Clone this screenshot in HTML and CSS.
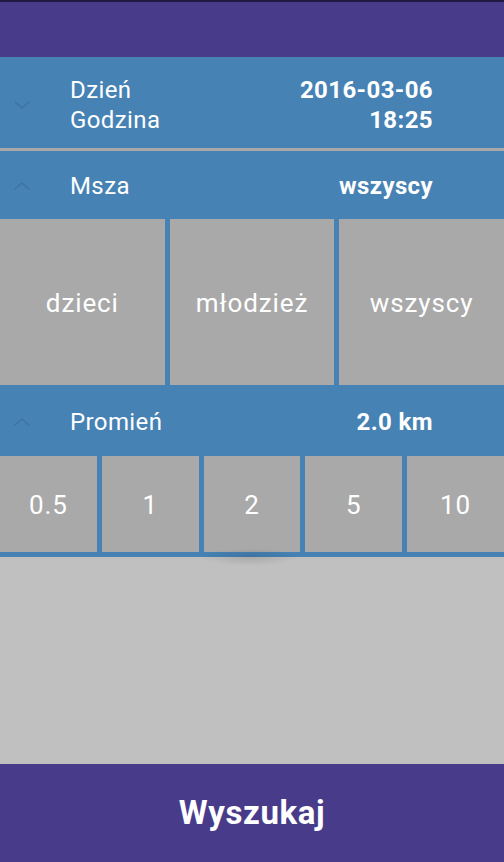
FILE: index.html
```html
<!DOCTYPE html>
<html lang="pl">
<head>
<meta charset="utf-8">
<link rel="stylesheet" href="styles.css">
</head>
<body>
<div class="app">
  <div class="topbar"></div>

  <div class="header header-date">
    <svg class="chev" viewBox="0 0 16 10" width="16" height="10"><path d="M1 2 L8 8 L15 2" /></svg>
    <div class="labels">
      <span>Dzień</span>
      <span>Godzina</span>
    </div>
    <div class="values">
      <span>2016-03-06</span>
      <span>18:25</span>
    </div>
  </div>
  <div class="divider"></div>

  <div class="header">
    <svg class="chev" viewBox="0 0 16 10" width="16" height="10"><path d="M1 8 L8 2 L15 8" /></svg>
    <div class="labels"><span>Msza</span></div>
    <div class="values"><span>wszyscy</span></div>
  </div>
  <div class="grid grid3">
    <div class="cell">dzieci</div>
    <div class="cell">młodzież</div>
    <div class="cell">wszyscy</div>
  </div>

  <div class="header header-radius">
    <svg class="chev" viewBox="0 0 16 10" width="16" height="10"><path d="M1 8 L8 2 L15 8" /></svg>
    <div class="labels"><span>Promień</span></div>
    <div class="values"><span>2.0 km</span></div>
  </div>
  <div class="grid grid5">
    <div class="cell">0.5</div>
    <div class="cell">1</div>
    <div class="cell">2</div>
    <div class="cell">5</div>
    <div class="cell">10</div>
  </div>

  <div class="filler"><div class="shadow"></div></div>

  <div class="footer">Wyszukaj</div>
</div>
</body>
</html>
```

FILE: styles.css
```css
html, body {
  margin: 0;
  padding: 0;
  height: 100%;
  background: #c0c0c0;
}
.app {
  width: 504px;
  height: 862px;
  display: flex;
  flex-direction: column;
  font-family: Roboto, "Noto Sans", sans-serif;
  color: #ffffff;
  overflow: hidden;
}
.topbar {
  height: 55px;
  border-top: 2px solid #1e1b3e;
  background: #483c8a;
  flex: none;
}
.header {
  background: #4682b4;
  display: grid;
  grid-template-columns: 56px 1fr auto;
  align-items: center;
  padding: 1px 71px 0 14px;
  height: 67px;
  flex: none;
  font-size: 24px;
  letter-spacing: 0.4px;
}
.header-date {
  height: 87px;
  padding-top: 4px;
}
.header-radius {
  height: 68px;
  padding-top: 3px;
}
.chev {
  display: block;
  fill: none;
  stroke: #3d73a3;
  stroke-width: 1.6;
  stroke-linecap: round;
  stroke-linejoin: round;
}
.labels, .values {
  display: flex;
  flex-direction: column;
  line-height: 30px;
}
.values {
  align-items: flex-end;
  font-weight: 700;
}
.divider {
  height: 3px;
  background: #a9a9a9;
  flex: none;
}
.grid {
  display: grid;
  gap: 5px;
  background: #4682b4;
  flex: none;
}
.grid3 {
  grid-template-columns: repeat(3, 1fr);
  height: 166px;
}
.grid5 {
  grid-template-columns: repeat(5, 1fr);
  height: 96px;
  border-bottom: 5px solid #4682b4;
}
.cell {
  background: #a9a9a9;
  display: flex;
  align-items: center;
  justify-content: center;
  font-size: 26px;
  letter-spacing: 0.9px;
  padding-top: 2px;
}
.filler {
  flex: 1;
  background: #c0c0c0;
  position: relative;
}
.shadow {
  position: absolute;
  left: 200px;
  top: -9px;
  width: 100px;
  height: 18px;
  border-radius: 50%;
  background: radial-gradient(ellipse at center, rgba(0,0,0,0.12), rgba(0,0,0,0) 70%);
}
.footer {
  height: 98px;
  flex: none;
  background: #483c8a;
  display: flex;
  align-items: center;
  justify-content: center;
  font-size: 33px;
  font-weight: 700;
  letter-spacing: 0.6px;
  padding-bottom: 2px;
  box-sizing: border-box;
}
```
